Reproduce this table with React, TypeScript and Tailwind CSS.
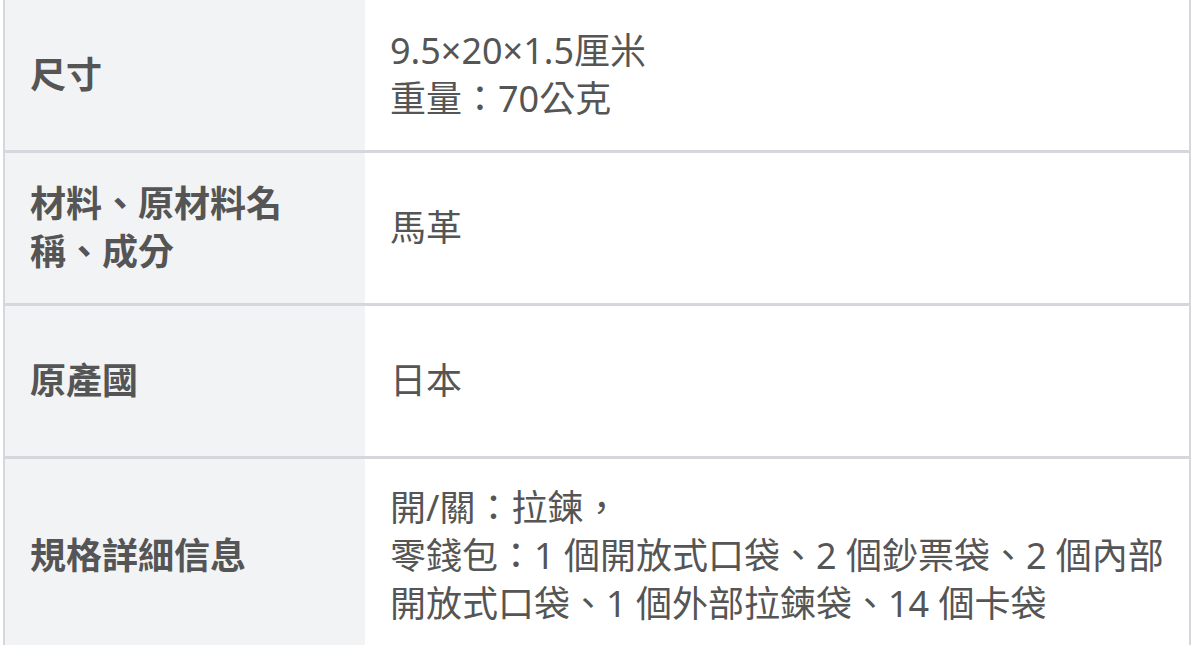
import React from 'react';

// 商品規格表の行データ
interface SpecRow {
  label: string;
  value: React.ReactNode;
}

const SPEC_ROWS: SpecRow[] = [
  {
    label: '尺寸',
    value: (
      <>
        9.5×20×1.5厘米
        <br />
        重量：70公克
      </>
    ),
  },
  { label: '材料、原材料名稱、成分', value: '馬革' },
  { label: '原產國', value: '日本' },
  {
    label: '規格詳細信息',
    value: (
      <>
        開/關：拉鍊，
        <br />
        零錢包：1 個開放式口袋、2 個鈔票袋、2 個內部開放式口袋、1 個外部拉鍊袋、14 個卡袋
      </>
    ),
  },
];

export default function App() {
  return (
    <div
      className="h-[645px] w-full overflow-hidden bg-white pl-[3px] pr-[1px] text-[36px] leading-[48px] text-[#555555]"
      style={{ fontFamily: '"Noto Sans", "Noto Sans CJK TC", sans-serif' }}
    >
      <div className="border-x-[2px] border-[#d5d7dd]">
        {SPEC_ROWS.map((row) => (
          <div key={row.label} className="flex min-h-[153px] border-b-[3px] border-[#d5d7dd]">
            {/* 項目名 */}
            <div className="flex w-[360px] shrink-0 items-center bg-[#f2f3f5] px-[25px] py-[25px] font-bold">
              <span>{row.label}</span>
            </div>
            {/* 値 */}
            <div className="flex flex-1 items-center px-[25px] py-[25px]">
              <span>{row.value}</span>
            </div>
          </div>
        ))}
      </div>
    </div>
  );
}
